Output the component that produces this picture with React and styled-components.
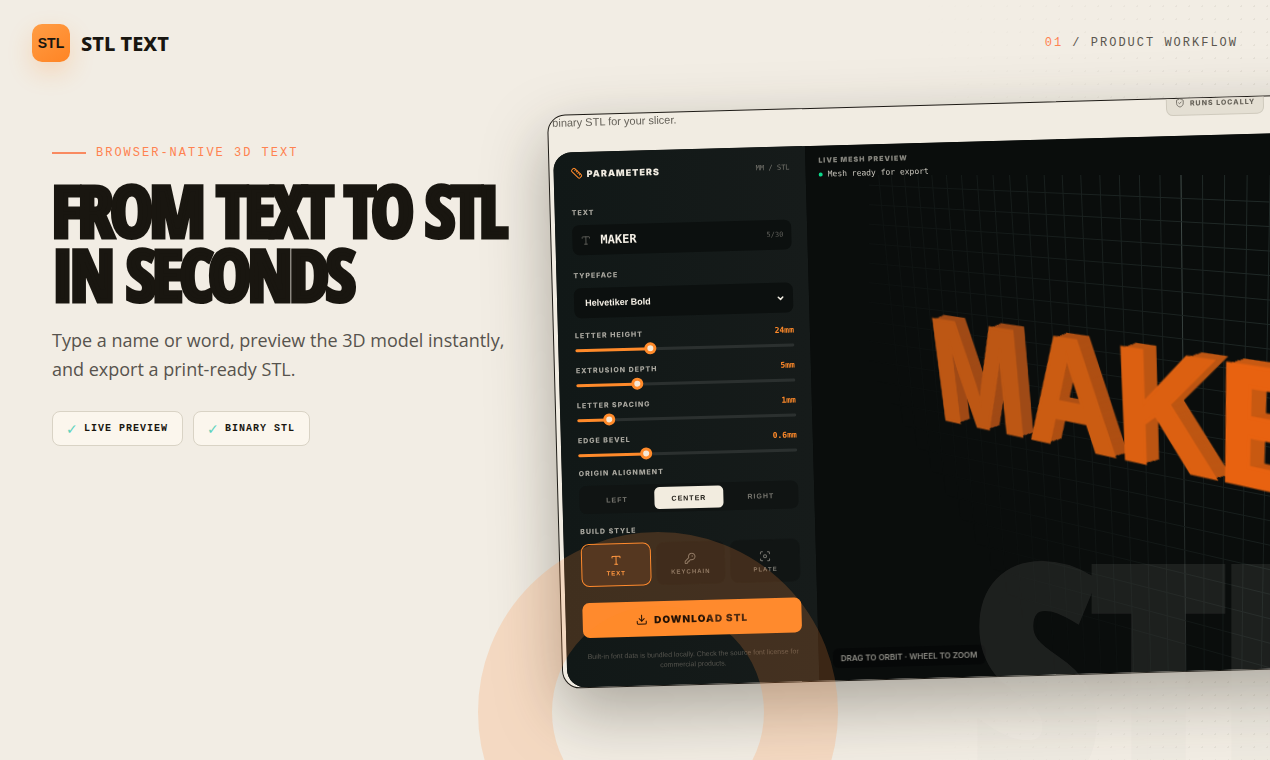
import React from "react";
import styled, { createGlobalStyle } from "styled-components";
import {
  Ruler,
  Type,
  KeyRound,
  Focus,
  Download,
  ShieldCheck,
  ChevronDown
} from "lucide-react";

const GlobalStyle = createGlobalStyle`
  * {
    box-sizing: border-box;
  }
  body {
    margin: 0;
    background: #f2ede4;
    color: #191610;
    font-family: "Liberation Sans", Arial, sans-serif;
  }
  button, input, select {
    font-family: inherit;
    margin: 0;
  }
`;

const Page = styled.div`
  position: relative;
  height: 100vh;
  overflow: hidden;
  &::before {
    content: "";
    position: absolute;
    inset: 0;
    background: radial-gradient(circle, rgba(60, 50, 30, 0.14) 1px, transparent 1px);
    background-size: 13px 13px;
    mask-image: linear-gradient(90deg, transparent 72%, #000 130%);
  }
`;
const Header = styled.header`
  position: relative;
  display: flex;
  align-items: center;
  justify-content: space-between;
  padding: 24px 32px;
`;
const Brand = styled.div`
  display: flex;
  align-items: center;
  gap: 11px;
  font-family: "Noto Sans", "Open Sans", sans-serif;
  font-weight: 800;
  font-size: 20px;
`;
const Logo = styled.span`
  display: flex;
  align-items: center;
  justify-content: center;
  width: 38px;
  height: 38px;
  border-radius: 10px;
  background: linear-gradient(145deg, #ff9d45, #ff8424);
  box-shadow: 0 10px 24px rgba(255, 138, 42, 0.22);
  font-family: "Liberation Sans", Arial, sans-serif;
  font-size: 14px;
`;
const Step = styled.div`
  font-family: "Courier New", "Liberation Mono", monospace;
  font-size: 12px;
  letter-spacing: 2px;
  color: #5a564e;
  span {
    color: #ff8250;
  }
`;
const Main = styled.main`
  display: grid;
  grid-template-columns: 495px 1fr;
  padding: 29px 0 0 52px;
`;
const Copy = styled.section`
  position: relative;
  padding-top: 31px;
`;
const Eyebrow = styled.div`
  display: flex;
  align-items: center;
  gap: 10px;
  font-family: "Courier New", "Liberation Mono", monospace;
  font-size: 12px;
  line-height: 14px;
  letter-spacing: 2px;
  color: #ff8250;
  &::before {
    content: "";
    width: 34px;
    height: 2px;
    background: #f98a60;
  }
`;
const Title = styled.h1`
  margin: 18px 0 0;
  font-family: Impact, "Open Sans Condensed", "Roboto Condensed", sans-serif;
  font-weight: 900;
  font-size: 71px;
  line-height: 64px;
  letter-spacing: -3px;
  white-space: nowrap;
  -webkit-text-stroke: 5px #191610;
`;
const Lead = styled.p`
  margin: 20px 0 0;
  font-family: "Open Sans", "Noto Sans", sans-serif;
  font-weight: 400;
  font-size: 18px;
  line-height: 29px;
  color: #57534d;
`;
const Chips = styled.div`
  display: flex;
  gap: 10px;
  margin-top: 27px;
`;
const Chip = styled.span`
  display: flex;
  align-items: center;
  gap: 7px;
  height: 35px;
  padding: 0 14px 0 13px;
  border: 1px solid #d9d3c5;
  border-radius: 8px;
  background: #fbf6ed;
  font-family: "Courier New", "Liberation Mono", monospace;
  font-size: 10px;
  font-weight: 700;
  letter-spacing: 1px;
  i {
    width: 11px;
    color: #5fd3bd;
    font-family: "DejaVu Sans", sans-serif;
    font-size: 14px;
    font-style: normal;
    letter-spacing: 0;
  }
`;

const Frame = styled.section`
  position: relative;
  width: 860px;
  height: 574px;
  padding-left: 4px;
  overflow: hidden;
  border: 1px solid #1d1a15;
  border-radius: 18px;
  background: #f1ece2;
  transform: rotate(-1.55deg);
  transform-origin: 0 0;
`;
const Shadow = styled.div`
  justify-self: start;
  filter: drop-shadow(0 24px 32px rgba(30, 26, 16, 0.34));
`;
const AppTop = styled.div`
  display: flex;
  align-items: flex-end;
  gap: 492px;
  height: 37px;
  padding-bottom: 20px;
`;
const Intro = styled.p`
  margin: 0;
  width: 122px;
  flex: none;
  font-size: 11px;
  line-height: 20px;
  color: #67635b;
  white-space: nowrap;
`;
const Badge = styled.span`
  display: flex;
  align-items: center;
  gap: 5px;
  flex: none;
  height: 26px;
  padding: 0 8px;
  border: 1px solid #cfcabd;
  border-radius: 7px;
  background: #e4dfd3;
  color: #68645b;
  font-family: Inter, sans-serif;
  font-size: 7px;
  font-weight: 800;
  letter-spacing: 1px;
`;
const Workspace = styled.div`
  display: grid;
  grid-template-columns: 252px 1fr;
  height: 535px;
  overflow: hidden;
  border-radius: 18px;
  background: #0a0d0c;
`;
const Sidebar = styled.form`
  padding: 0 16px 0 17px;
  background: linear-gradient(90deg, #111817, #161b1a);
`;
const SideHead = styled.div`
  display: flex;
  align-items: center;
  justify-content: space-between;
  height: 42px;
  color: #77766f;
  font-family: "DejaVu Sans Mono", monospace;
  font-size: 7px;
`;
const SideTitle = styled.h2`
  display: flex;
  align-items: center;
  gap: 4px;
  margin: 0;
  color: #efeae0;
  font-family: Inter, sans-serif;
  font-size: 9px;
  font-weight: 900;
  letter-spacing: 1px;
  svg {
    color: #ff8a2a;
  }
`;
const Field = styled.div`
  display: flex;
  flex-direction: column;
  gap: 7px;
  margin-top: ${p => p.$top}px;
`;
const Label = styled.label`
  color: #a9a79f;
  font-family: Inter, sans-serif;
  font-size: 7px;
  font-weight: 800;
  line-height: 10px;
  letter-spacing: 1px;
`;
const Box = styled.div`
  display: flex;
  align-items: center;
  gap: 9px;
  height: 30px;
  padding: 0 8px;
  border-radius: 7px;
  background: #0c100f;
  color: #5f5f5a;
  font-family: "DejaVu Sans Mono", monospace;
  font-size: 7px;
`;
const TextInput = styled.input`
  flex: 1;
  min-width: 0;
  padding: 0;
  border: 0;
  outline: 0;
  background: none;
  color: #f4efe5;
  font-family: "DejaVu Sans Mono", monospace;
  font-size: 12px;
  font-weight: 700;
`;
const Select = styled.select`
  flex: 1;
  appearance: none;
  padding: 0 0 0 3px;
  border: 0;
  background: none;
  color: #f4efe5;
  font-family: "Liberation Sans", sans-serif;
  font-size: 9px;
  font-weight: 700;
`;
const Sliders = styled.div`
  display: flex;
  flex-direction: column;
  gap: 11px;
  margin-top: 13px;
`;
const SliderField = styled.div`
  display: grid;
  grid-template-columns: 1fr auto;
  row-gap: 4px;
  output {
    color: #ff8a2a;
    font-family: "DejaVu Sans Mono", monospace;
    font-size: 8px;
    font-weight: 700;
    line-height: 10px;
  }
`;
const Range = styled.input`
  grid-column: 1 / -1;
  appearance: none;
  width: 100%;
  height: 10px;
  background: none;
  &::-webkit-slider-runnable-track {
    height: 3px;
    border-radius: 2px;
    background: linear-gradient(90deg, #ff8a2a var(--fill), #2b302f var(--fill));
  }
  &::-webkit-slider-thumb {
    appearance: none;
    width: 12px;
    height: 12px;
    margin-top: -5px;
    border: 3px solid #ff8a2a;
    border-radius: 50%;
    background: #f6e8d6;
  }
`;
const Segments = styled.div`
  display: grid;
  grid-template-columns: repeat(3, 1fr);
  gap: 3px;
  height: 28px;
  padding: 3px;
  border-radius: 7px;
  background: #101413;
`;
const Segment = styled.button`
  padding: 0;
  border: 0;
  border-radius: 5px;
  background: ${p => (p.$active ? "#f2ecdf" : "none")};
  color: ${p => (p.$active ? "#191610" : "#77766f")};
  font-size: 7px;
  font-weight: 700;
  letter-spacing: 1px;
`;
const Styles = styled.div`
  display: grid;
  grid-template-columns: repeat(3, 1fr);
  gap: 5px;
`;
const StyleButton = styled.button`
  display: flex;
  flex-direction: column;
  align-items: center;
  justify-content: center;
  gap: 4px;
  height: 43px;
  padding: 0;
  border: 1px solid ${p => (p.$active ? "#ff8a2a" : "#131716")};
  border-radius: 8px;
  background: ${p => (p.$active ? "#2b2219" : "#111514")};
  color: ${p => (p.$active ? "#ff9a42" : "#77766f")};
  font-size: 6px;
  font-weight: 700;
  letter-spacing: 1px;
`;
const DownloadButton = styled.button`
  display: flex;
  align-items: center;
  justify-content: center;
  gap: 6px;
  width: 100%;
  height: 35px;
  margin-top: 16px;
  border: 0;
  border-radius: 7px;
  background: #ff8a2a;
  color: #241206;
  font-family: Inter, sans-serif;
  font-size: 10px;
  font-weight: 900;
  letter-spacing: 1px;
`;
const Note = styled.p`
  margin: 14px 0 0;
  color: #55544e;
  font-size: 7px;
  line-height: 10px;
  text-align: center;
`;

const Preview = styled.div`
  position: relative;
  overflow: hidden;
  background: #0a0d0c;
`;
const PreviewHead = styled.div`
  padding: 10px 13px;
  color: #85847d;
  font-family: Inter, sans-serif;
  font-size: 7px;
  font-weight: 900;
  line-height: 10px;
  letter-spacing: 1px;
`;
const Status = styled.div`
  display: flex;
  align-items: center;
  gap: 5px;
  margin-top: 4px;
  color: #c9c6bd;
  font-family: "DejaVu Sans Mono", monospace;
  font-size: 8px;
  font-weight: 400;
  letter-spacing: 0;
  &::before {
    content: "";
    width: 4px;
    height: 4px;
    border-radius: 50%;
    background: #0bd88a;
  }
`;
const Grid = styled.svg`
  position: absolute;
  inset: 0;
  width: 100%;
  height: 100%;
  mask-image: linear-gradient(60deg, transparent 26%, #000 75%);
`;
// seen at an angle: the word runs away from the camera to the left
const Mesh = styled.div`
  position: absolute;
  left: -10px;
  top: 0;
  font-size: 146px;
  font-weight: 700;
  line-height: 100px;
  white-space: nowrap;
  transform-origin: 10px 0;
  transform: matrix3d(
    0.6635, 0.03678, 0, -0.000522,
    0.1677, 1.1296, 0, 0.000494,
    0, 0, 1, 0,
    124, 178, 0, 1
  );
`;
const Letter = styled.span`
  color: ${p => p.$face};
  -webkit-text-stroke: 3px ${p => p.$face};
  text-shadow: ${p =>
    Array.from(
      { length: 15 },
      (_, i) => `${i + 1}px ${-Math.round((i + 1) * 4) / 10}px 0 ${p.$side}`
    ).join(", ")};
`;
const Hint = styled.div`
  position: absolute;
  left: 14px;
  bottom: 12px;
  padding: 0 8px;
  border-radius: 6px;
  background: #060808;
  color: #8b8a83;
  font-family: Inter, sans-serif;
  font-size: 8px;
  font-weight: 600;
  line-height: 20px;
`;
const Ring = styled.div`
  position: absolute;
  left: 478px;
  top: 532px;
  width: 360px;
  height: 360px;
  border: 74px solid rgba(255, 138, 60, 0.2);
  border-radius: 50%;
  pointer-events: none;
`;
const Ghost = styled.div`
  position: absolute;
  left: 976px;
  top: 547px;
  color: #d0c8c4;
  font-family: Impact, "Open Sans Condensed", "Roboto Condensed", sans-serif;
  font-size: 290px;
  font-weight: 900;
  line-height: 240px;
  opacity: 0.1;
  pointer-events: none;
  -webkit-text-stroke: 16px #d0c8c4;
`;

const sliders = [
  { id: "height", label: "LETTER HEIGHT", min: 8, max: 56, step: 1 },
  { id: "depth", label: "EXTRUSION DEPTH", min: 1, max: 16, step: 1 },
  { id: "spacing", label: "LETTER SPACING", min: 0, max: 8, step: 1 },
  { id: "bevel", label: "EDGE BEVEL", min: 0, max: 2, step: 0.1 }
];
const letters = [
  ["M", "#bd5714", "#a04a16"],
  ["A", "#cb5c12", "#ae4f13"],
  ["K", "#dc6011", "#bd5613"],
  ["E", "#e86210", "#c85912"],
  ["R", "#ee6610", "#cf5c12"]
];
const styles = [
  ["TEXT", Type],
  ["KEYCHAIN", KeyRound],
  ["PLATE", Focus]
];

const gridLines = () => {
  const lines = [];
  for (let j = -18; j <= 12; j++) {
    const top = 634 + 21.3 * j + 0.25 * j * j;
    const bottom = 639 + 18 * j + 0.2 * j * j;
    lines.push(
      <line
        key={"v" + j}
        x1={top}
        y1="60"
        x2={bottom}
        y2="560"
        stroke={j === 0 ? "#46524f" : "#212a28"}
      />
    );
  }
  for (let i = 0; i < 20; i++) {
    const y = 87 + 24.5 * i;
    const slope = 0.042 + 0.0125 * i;
    lines.push(
      <line
        key={"h" + i}
        x1="322"
        y1={y - 400 * slope}
        x2="922"
        y2={y + 200 * slope}
        stroke="#212a28"
      />
    );
  }
  return lines;
};

class App extends React.Component {
  state = {
    text: "MAKER",
    align: "CENTER",
    build: "TEXT",
    values: { height: 24, depth: 5, spacing: 1, bevel: 0.6 }
  };

  handleText = e => this.setState({ text: e.target.value });

  handleSlider = (id, value) =>
    this.setState({ values: { ...this.state.values, [id]: Number(value) } });

  render() {
    const { text, align, build, values } = this.state;
    return (
      <Page>
        <GlobalStyle />
        <Header>
          <Brand>
            <Logo>STL</Logo>
            STL TEXT
          </Brand>
          <Step>
            <span>01</span> / PRODUCT WORKFLOW
          </Step>
        </Header>
        <Main>
          <Copy>
            <Eyebrow>BROWSER-NATIVE 3D TEXT</Eyebrow>
            <Title>
              FROM TEXT TO STL
              <br />
              IN SECONDS
            </Title>
            <Lead>
              Type a name or word, preview the 3D model instantly,
              <br />
              and export a print-ready STL.
            </Lead>
            <Chips>
              <Chip>
                <i>✓</i>LIVE PREVIEW
              </Chip>
              <Chip>
                <i>✓</i>BINARY STL
              </Chip>
            </Chips>
          </Copy>
          <Shadow>
            <Frame>
              <AppTop>
                <Intro>binary STL for your slicer.</Intro>
                <Badge>
                  <ShieldCheck size={10} />
                  RUNS LOCALLY
                </Badge>
              </AppTop>
              <Workspace>
                <Sidebar onSubmit={e => e.preventDefault()}>
                  <SideHead>
                    <SideTitle>
                      <Ruler size={12} />
                      PARAMETERS
                    </SideTitle>
                    MM / STL
                  </SideHead>
                  <Field $top={14}>
                    <Label htmlFor="text">TEXT</Label>
                    <Box>
                      <Type size={11} />
                      <TextInput
                        id="text"
                        type="text"
                        maxLength={30}
                        value={text}
                        onChange={this.handleText}
                      />
                      {text.length}/30
                    </Box>
                  </Field>
                  <Field $top={16}>
                    <Label htmlFor="typeface">TYPEFACE</Label>
                    <Box>
                      <Select id="typeface">
                        <option>Helvetiker Bold</option>
                      </Select>
                      <ChevronDown size={9} color="#f4efe5" strokeWidth={4} />
                    </Box>
                  </Field>
                  <Sliders>
                    {sliders.map(s => (
                      <SliderField key={s.id}>
                        <Label htmlFor={s.id}>{s.label}</Label>
                        <output htmlFor={s.id}>{values[s.id]}mm</output>
                        <Range
                          id={s.id}
                          type="range"
                          min={s.min}
                          max={s.max}
                          step={s.step}
                          value={values[s.id]}
                          onChange={e => this.handleSlider(s.id, e.target.value)}
                          style={{
                            "--fill": `${((values[s.id] - s.min) / (s.max - s.min)) * 100}%`
                          }}
                        />
                      </SliderField>
                    ))}
                  </Sliders>
                  <Field $top={9}>
                    <Label as="div">ORIGIN ALIGNMENT</Label>
                    <Segments>
                      {["LEFT", "CENTER", "RIGHT"].map(name => (
                        <Segment
                          key={name}
                          type="button"
                          $active={align === name}
                          onClick={() => this.setState({ align: name })}
                        >
                          {name}
                        </Segment>
                      ))}
                    </Segments>
                  </Field>
                  <Field $top={13}>
                    <Label as="div">BUILD STYLE</Label>
                    <Styles>
                      {styles.map(([name, Icon]) => (
                        <StyleButton
                          key={name}
                          type="button"
                          $active={build === name}
                          onClick={() => this.setState({ build: name })}
                        >
                          <Icon size={12} />
                          {name}
                        </StyleButton>
                      ))}
                    </Styles>
                  </Field>
                  <DownloadButton type="submit">
                    <Download size={12} />
                    DOWNLOAD STL
                  </DownloadButton>
                  <Note>
                    Built-in font data is bundled locally. Check the source font
                    license for commercial products.
                  </Note>
                </Sidebar>
                <Preview>
                  <Grid>
                    <g transform="translate(-257 -38) rotate(1.55)">
                      {gridLines()}
                    </g>
                  </Grid>
                  <PreviewHead>
                    LIVE MESH PREVIEW
                    <Status>Mesh ready for export</Status>
                  </PreviewHead>
                  <Mesh>
                    {letters.map(([char, face, side]) => (
                      <Letter key={char} $face={face} $side={side}>
                        {char}
                      </Letter>
                    ))}
                  </Mesh>
                  <Hint>DRAG TO ORBIT · WHEEL TO ZOOM</Hint>
                </Preview>
              </Workspace>
            </Frame>
          </Shadow>
        </Main>
        <Ring />
        <Ghost aria-hidden="true">STL</Ghost>
      </Page>
    );
  }
}

export default App;
